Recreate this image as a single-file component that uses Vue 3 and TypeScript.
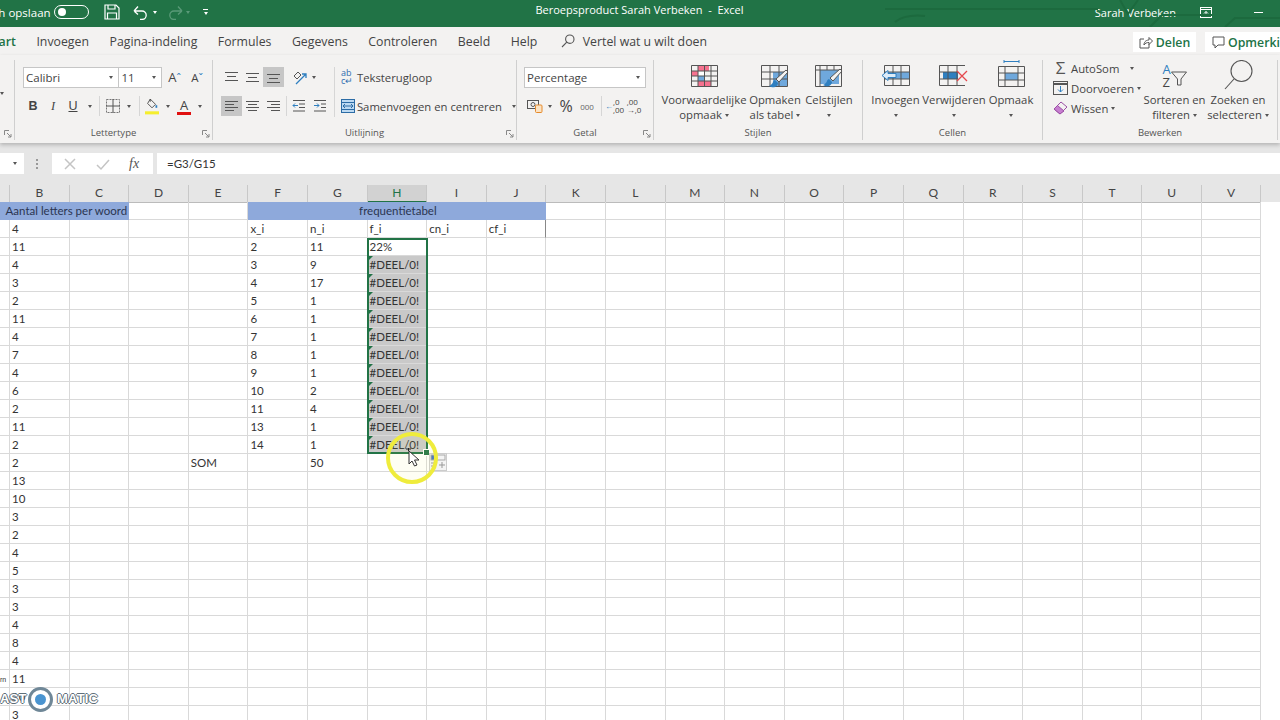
<script setup lang="ts">
import { computed } from 'vue'

// kolommen in het werkblad, A is grotendeels buiten beeld
const columns = ['', ...'BCDEFGHIJKLMNOPQRSTUV'.split('')]

const lettersB = ['4', '11', '4', '3', '2', '11', '4', '7', '4', '6', '2', '11', '2', '2', '13', '10', '3', '2', '4', '5', '3', '3', '4', '8', '4', '11', '10', '3']
const xi = ['2', '3', '4', '5', '6', '7', '8', '9', '10', '11', '13', '14']
const ni = ['11', '9', '17', '1', '1', '1', '1', '1', '2', '4', '1', '1']

interface Cell {
  text: string
  span: number
  kind: string
}

const blueRow: Cell[] = [
  { text: 'Aantal letters per woord', span: 3, kind: 'blue right' },
  { text: '', span: 1, kind: '' },
  { text: '', span: 1, kind: '' },
  { text: 'frequentietabel', span: 5, kind: 'blue center' },
  ...Array.from({ length: 12 }, () => ({ text: '', span: 1, kind: '' })),
]

const rows = computed<Cell[][]>(() =>
  lettersB.map((val, r) =>
    columns.map((col) => {
      let text = ''
      let kind = ''
      const i = r - 1
      if (col === 'B') text = val
      if (r === 0) {
        if (col === 'F') text = 'x_i'
        if (col === 'G') text = 'n_i'
        if (col === 'H') text = 'f_i'
        if (col === 'I') text = 'cn_i'
        if (col === 'J') { text = 'cf_i'; kind = 'edge' }
      } else if (i < xi.length) {
        if (col === 'F') text = xi[i]
        if (col === 'G') text = ni[i]
        if (col === 'H') {
          text = i === 0 ? '22%' : '#DEEL/0!'
          kind = i === 0 ? '' : 'err'
        }
      } else if (i === xi.length) {
        if (col === 'E') text = 'SOM'
        if (col === 'G') text = '50'
      }
      return { text, span: 1, kind }
    }),
  ),
)
</script>

<template>
  <div class="app">
    <div class="titlebar">
      <svg class="circuit" width="400" height="27" viewBox="0 0 400 27">
        <path d="M5 9H170l8 0M178 9l40 0M15 22q10-8 30-6M240 0l8 14 10-14M270 27l12-12h50M345 27l10-9h45" fill="none" stroke="#1c6a3e" stroke-width="2" />
      </svg>
      <div class="qat">
        <span class="autosave">Automatisch opslaan</span>
        <span class="toggle"><i></i></span>
        <svg class="save" width="16" height="16" viewBox="0 0 16 16" fill="none" stroke="#fff" stroke-width="1.2">
          <path d="M1 1h11l3 3v11H1z" />
          <path d="M4 1v4h7V1M3.5 15V9h9v6" />
        </svg>
        <svg class="undo" width="15" height="15" viewBox="0 0 15 15" fill="none" stroke="#fff" stroke-width="1.3">
          <path d="M1 6h8a4.2 4.2 0 0 1 0 8.4H7M1 6l4-4.5M1 6l4 3.5" />
        </svg>
        <i class="caret white undo-caret"></i>
        <svg class="redo" width="15" height="15" viewBox="0 0 15 15" fill="none" stroke="#5a9a78" stroke-width="1.3">
          <path d="M14 6H6a4.2 4.2 0 0 0 0 8.4h2M14 6l-4-4.5M14 6l-4 3.5" />
        </svg>
        <i class="caret dim redo-caret"></i>
        <span class="customize"><b></b><i class="caret white"></i></span>
      </div>
      <div class="doc-title">Beroepsproduct Sarah Verbeken &nbsp;-&nbsp; Excel</div>
      <div class="user">
        <span>Sarah Verbeken</span>
        <svg class="display-opt" width="12" height="11" viewBox="0 0 12 11" fill="none" stroke="#fff">
          <rect x=".5" y=".5" width="11" height="10" />
          <path d="M.5 2.5h11M6 9V4.5M4 6.5l2-2 2 2" />
        </svg>
        <b class="minimize"></b>
      </div>
    </div>

    <div class="tabs">
      <span class="tab active">Start</span>
      <span class="tab">Invoegen</span>
      <span class="tab">Pagina-indeling</span>
      <span class="tab">Formules</span>
      <span class="tab">Gegevens</span>
      <span class="tab">Controleren</span>
      <span class="tab">Beeld</span>
      <span class="tab">Help</span>
      <span class="tell">
        <svg width="14" height="14" viewBox="0 0 14 14" fill="none" stroke="#555" stroke-width="1.1">
          <circle cx="8.8" cy="5.2" r="4.2" />
          <path d="M5.8 8.2L1 13" />
        </svg>
        Vertel wat u wilt doen
      </span>
      <span class="share">
        <svg width="14" height="13" viewBox="0 0 14 13" fill="none" stroke="#555">
          <path d="M5 3H1v9h9V8M5 9c0-4 3-5 5-5V1.500l3.500 3.500L10 8.500V6.500C8 6.500 6 7 5 9z" />
        </svg>
        Delen
      </span>
      <span class="share comment">
        <svg width="13" height="13" viewBox="0 0 13 13" fill="none" stroke="#555">
          <path d="M1 1h11v8H6l-3 3V9H1z" />
        </svg>
        Opmerkingen
      </span>
    </div>

    <div class="ribbon">
      <!-- Klembord, bijna helemaal buiten beeld -->
      <section class="group g-clip">
        <i class="caret clip-caret"></i>
        <svg class="launch" width="8" height="8" viewBox="0 0 8 8" fill="none" stroke="#888"><path d="M.5 5V.5H5M3 3l4 4M7 4v3H4" /></svg>
      </section>

      <section class="group g-font">
        <div class="row">
          <div class="select font-name"><span>Calibri</span><i class="caret"></i></div>
          <div class="select font-size"><span>11</span><i class="caret"></i></div>
          <span class="grow-a">A<em>ˆ</em></span>
          <span class="grow-a small">A<em>ˇ</em></span>
        </div>
        <div class="row row2">
          <span class="slot w20 t-b">B</span>
          <span class="slot w20 t-i">I</span>
          <span class="slot w20 t-u">U</span>
          <span class="slot w14"><i class="caret"></i></span>
          <span class="slot w4"><b class="vsep"></b></span>
          <span class="slot w24">
            <svg width="14" height="14" viewBox="0 0 14 14" fill="none" stroke="#777" stroke-dasharray="2 1"><rect x=".5" y=".5" width="13" height="13" /><path d="M7 0v14M0 7h14" stroke="#555" stroke-dasharray="none" /></svg>
          </span>
          <span class="slot w8"><i class="caret"></i></span>
          <span class="slot w12"><b class="vsep"></b></span>
          <span class="slot w14">
            <svg width="16" height="19" viewBox="0 0 16 19" fill="none"><path d="M6 1l6 6-4 4-5-5zM6 1v3" stroke="#444" /><path d="M13 8v3" stroke="#2f7fc0" stroke-width="2" /><rect y="15" width="16" height="3.500" fill="#f5ee2e" /></svg>
          </span>
          <span class="slot w18"><i class="caret"></i></span>
          <span class="slot w14">
            <span class="color-a">A</span>
          </span>
          <span class="slot w18"><i class="caret"></i></span>
        </div>
        <div class="label">Lettertype</div>
        <svg class="launch" width="8" height="8" viewBox="0 0 8 8" fill="none" stroke="#888"><path d="M.5 5V.5H5M3 3l4 4M7 4v3H4" /></svg>
      </section>

      <section class="group g-align">
        <div class="split">
          <div class="col-a">
            <div class="row">
              <span class="slot w21"><svg width="15" height="12" viewBox="0 0 15 12" stroke="#555"><path d="M1 1.500h13M3 5.500h9M1 9.500h13" /></svg></span>
              <span class="slot w21"><svg width="15" height="12" viewBox="0 0 15 12" stroke="#555"><path d="M1 2.500h13M3 6.500h9M1 10.500h13" /></svg></span>
              <span class="slot w21 on"><svg width="15" height="12" viewBox="0 0 15 12" stroke="#555"><path d="M1 3.500h13M3 7.500h9M1 11.500h13" /></svg></span>
              <span class="slot w6"></span>
              <span class="slot w20">
                <svg width="16" height="15" viewBox="0 0 16 15" fill="none"><path d="M2 6l4-4 3 3-4 4zM6 8l2-2" stroke="#555" /><path d="M4 14L14 4M10 4h4v4" stroke="#2f7fc0" stroke-width="1.300" /></svg>
              </span>
              <span class="slot w8"><i class="caret"></i></span>
            </div>
            <div class="row row2">
              <span class="slot w21 on"><svg width="15" height="12" viewBox="0 0 15 12" stroke="#555"><path d="M1 1.500h13M1 4.500h9M1 7.500h13M1 10.500h9" /></svg></span>
              <span class="slot w21"><svg width="15" height="12" viewBox="0 0 15 12" stroke="#555"><path d="M1 1.500h13M3 4.500h9M1 7.500h13M3 10.500h9" /></svg></span>
              <span class="slot w21"><svg width="15" height="12" viewBox="0 0 15 12" stroke="#555"><path d="M1 1.500h13M5 4.500h9M1 7.500h13M5 10.500h9" /></svg></span>
              <span class="slot w4"><b class="vsep"></b></span>
              <span class="slot w22"><svg width="14" height="12" viewBox="0 0 14 12" fill="none" stroke="#555"><path d="M1 .5h12M7 4h6M7 7.500h6M1 11h12" /><path d="M6 5.500H1M3 3.500l-2 2 2 2" stroke="#2f7fc0" /></svg></span>
              <span class="slot w20"><svg width="14" height="12" viewBox="0 0 14 12" fill="none" stroke="#555"><path d="M1 .5h12M8 4h5M8 7.500h5M1 11h12" /><path d="M1 5.500h5M4 3.500l2 2-2 2" stroke="#2f7fc0" /></svg></span>
            </div>
          </div>
          <div class="col-b">
            <div class="row textbtn">
              <span class="ab">ab<br />c↵</span>
              <span>Teksterugloop</span>
            </div>
            <div class="row textbtn row2">
              <svg width="14" height="14" viewBox="0 0 14 14" fill="#bcd9f2" stroke="#2c6ca5"><rect x=".5" y=".5" width="13" height="13" /><path d="M0 3.500h14M0 10.500h14M2 7h10M4 5L2 7l2 2M10 5l2 2-2 2" fill="none" /></svg>
              <span class="merge-text">Samenvoegen en centreren</span>
              <i class="caret"></i>
            </div>
          </div>
        </div>
        <div class="label">Uitlijning</div>
        <svg class="launch" width="8" height="8" viewBox="0 0 8 8" fill="none" stroke="#888"><path d="M.5 5V.5H5M3 3l4 4M7 4v3H4" /></svg>
      </section>

      <section class="group g-number">
        <div class="row">
          <div class="select number"><span>Percentage</span><i class="caret"></i></div>
        </div>
        <div class="row row2">
          <span class="slot w21">
            <svg width="16" height="14" viewBox="0 0 16 14" fill="none"><rect x=".5" y="1.500" width="11" height="8" stroke="#555" /><circle cx="6" cy="5.500" r="2" stroke="#555" /><rect x="8.500" y="6" width="6.500" height="7.500" rx="1" fill="#fbe3c4" stroke="#e58a2c" /></svg>
          </span>
          <span class="slot w10"><i class="caret"></i></span>
          <span class="slot w22 percent">%</span>
          <span class="slot w20 thousand">000</span>
          <span class="slot w8"><b class="vsep"></b></span>
          <span class="slot w19 dec"><em>←</em><span>,0<br />,00</span></span>
          <span class="slot w20 dec"><span>,00<br />→,0</span></span>
        </div>
        <div class="label">Getal</div>
        <svg class="launch" width="8" height="8" viewBox="0 0 8 8" fill="none" stroke="#888"><path d="M.5 5V.5H5M3 3l4 4M7 4v3H4" /></svg>
      </section>

      <section class="group g-styles">
        <div class="bigs">
          <div class="big w80">
            <span class="big-icon">
              <svg width="27" height="22" viewBox="0 0 27 22" fill="none">
                <rect x="7" y="1" width="11" height="5" fill="#f5728f" />
                <rect x="1" y="6" width="6" height="5" fill="#f5728f" />
                <rect x="7" y="6" width="6" height="5" fill="#fff" />
                <rect x="7" y="11" width="6" height="5" fill="#6fa8dc" />
                <rect x="7" y="16" width="13" height="5" fill="#f5728f" />
                <path d="M.5.5h26v21H.5zM7 0v22M13.500 0v22M20 0v22M0 6h27M0 11h27M0 16h27" stroke="#555" />
              </svg>
            </span>
            <span>Voorwaardelijke</span>
            <span>opmaak <i class="caret"></i></span>
          </div>
          <div class="big w48">
            <span class="big-icon">
              <svg width="28" height="25" viewBox="0 0 28 25" fill="none">
                <rect x="12" y="7" width="15" height="14" fill="#6fa8dc" />
                <path d="M.5.5h26v21H.5zM9 0v22M18 0v22M0 7h27M0 14h27" stroke="#555" />
                <path d="M27 7l-9 10-3-3 10-9z" fill="#f3f2f1" stroke="#555" />
                <path d="M14 15c-3 1-1 4-6 6 5 3 9 0 9-3z" fill="#2f7fc0" />
              </svg>
            </span>
            <span>Opmaken</span>
            <span>als tabel <i class="caret"></i></span>
          </div>
          <div class="big w46">
            <span class="big-icon">
              <svg width="28" height="25" viewBox="0 0 28 25" fill="none">
                <rect x="5" y="5" width="19" height="14" fill="#6fa8dc" />
                <path d="M.5.5h26v21H.5zM5 0v5M12 0v5M19 0v5M0 5h27M5 5v17" stroke="#555" />
                <path d="M27 6l-9 10-3-3 10-9z" fill="#f3f2f1" stroke="#555" />
                <path d="M14 14c-3 1-1 4-6 6 5 3 9 0 9-3z" fill="#2f7fc0" />
              </svg>
            </span>
            <span>Celstijlen</span>
            <span><i class="caret"></i></span>
          </div>
        </div>
        <div class="label">Stijlen</div>
      </section>

      <section class="group g-cells">
        <div class="bigs">
          <div class="big w45">
            <span class="big-icon">
              <svg width="30" height="21" viewBox="0 0 30 21" fill="none">
                <rect x="3" y="7" width="26" height="7" fill="#6fa8dc" />
                <path d="M3.500.5h25v20h-25zM12 0v21M20 0v21M3 7h26M3 14h26" stroke="#555" />
                <path d="M1 10.500L7 5.500v3h8v4H7v3z" fill="#dcebf8" stroke="#2f7fc0" />
              </svg>
            </span>
            <span>Invoegen</span>
            <span><i class="caret"></i></span>
          </div>
          <div class="big w58">
            <span class="big-icon">
              <svg width="30" height="21" viewBox="0 0 30 21" fill="none">
                <rect x="4" y="7" width="15" height="7" fill="#2f7fc0" />
                <path d="M26 .5H.5v20H26M9 0v21M18 0v21M0 7h19M0 14h19" stroke="#555" />
                <path d="M18 6l10 10M28 6L18 16" stroke="#e5484d" stroke-width="1.300" />
              </svg>
            </span>
            <span>Verwijderen</span>
            <span><i class="caret"></i></span>
          </div>
          <div class="big w42">
            <span class="big-icon top">
              <svg width="27" height="27" viewBox="0 0 27 27" fill="none">
                <path d="M6 1.500h15M6 0v3M21 0v3" stroke="#2f7fc0" />
                <rect x="7" y="13" width="13" height="7" fill="#6fa8dc" />
                <path d="M.5 6.500h26v20H.5zM7 6v21M20 6v21M0 13h27M0 20h27" stroke="#555" />
              </svg>
            </span>
            <span>Opmaak</span>
            <span><i class="caret"></i></span>
          </div>
        </div>
        <div class="label">Cellen</div>
      </section>

      <section class="group g-edit">
        <div class="bigs">
          <div class="stack">
            <div class="row textbtn edit-row">
              <span class="sum">Σ</span>
              <span>AutoSom</span>
              <i class="caret autosom-caret"></i>
            </div>
            <div class="row textbtn edit-row">
              <svg width="15" height="14" viewBox="0 0 15 14" fill="none"><rect x=".5" y=".5" width="14" height="13" stroke="#555" /><path d="M0 3h15" stroke="#555" stroke-width="2" /><path d="M7.500 5v6M5 8.500l2.500 2.500L10 8.500" stroke="#2f7fc0" /></svg>
              <span>Doorvoeren</span>
              <i class="caret"></i>
            </div>
            <div class="row textbtn edit-row">
              <svg width="15" height="14" viewBox="0 0 15 14" fill="none"><path d="M8 1l6 5-7 7-6-5z" fill="#f3f2f1" stroke="#9b4fa5" /><path d="M4.500 4.500L11 10l-4 3-6-5z" fill="#c77fd0" stroke="#9b4fa5" /></svg>
              <span>Wissen</span>
              <i class="caret"></i>
            </div>
          </div>
          <div class="big w57">
            <span class="big-icon sort">
              <span class="az"><em>A</em><span>Z</span></span>
              <svg width="16" height="15" viewBox="0 0 16 15" fill="none" stroke="#555"><path d="M.5 1h15L10 8v6H6.500V8z" /></svg>
            </span>
            <span>Sorteren en</span>
            <span>filteren <i class="caret"></i></span>
          </div>
          <div class="big w58 search">
            <span class="big-icon top">
              <svg width="29" height="31" viewBox="0 0 29 31" fill="none" stroke="#555" stroke-width="1.100"><circle cx="17.500" cy="11" r="10.500" /><path d="M10 19L1 29" /></svg>
            </span>
            <span>Zoeken en</span>
            <span>selecteren <i class="caret"></i></span>
          </div>
        </div>
        <div class="label">Bewerken</div>
      </section>
    </div>

    <div class="formula-area">
      <div class="namebox"><i class="caret"></i></div>
      <span class="dots"></span>
      <div class="fx-box">
        <svg width="14" height="14" viewBox="0 0 14 14" fill="none" stroke="#c4c4c4" stroke-width="1.500"><path d="M2 2l10 10M12 2L2 12" /></svg>
        <svg width="14" height="14" viewBox="0 0 14 14" fill="none" stroke="#c4c4c4" stroke-width="1.500"><path d="M1 8l4 4 8-9" /></svg>
        <span class="fx">fx</span>
      </div>
      <div class="formula">=G3/G15</div>
    </div>

    <div class="sheet">
      <div class="headers">
        <div v-for="(col, i) in columns" :key="i" class="colhead" :class="{ picked: col === 'H' }">{{ col }}</div>
      </div>
      <div class="cells blue-row">
        <div v-for="(cell, i) in blueRow" :key="i" class="cell" :class="cell.kind" :style="{ gridColumn: `span ${cell.span}` }">{{ cell.text }}</div>
      </div>
      <div v-for="(row, r) in rows" :key="r" class="cells">
        <div v-for="(cell, c) in row" :key="c" class="cell" :class="cell.kind">{{ cell.text }}</div>
      </div>

      <!-- selectie en muis liggen boven het blad -->
      <div class="selection"><b class="handle"></b></div>
      <div class="paste-opt">
        <svg width="17" height="16" viewBox="0 0 17 16" fill="none"><rect x="1" y="1" width="6" height="5" fill="#4472c4" /><rect x="1" y="1" width="14" height="5" stroke="#aaa" /><path d="M1 9h4M1 12h3M12 8v6M9 11h6" stroke="#999" /></svg>
      </div>
      <div class="highlight"></div>
      <svg class="pointer" width="16" height="20" viewBox="0 0 16 20">
        <path d="M3 3l0 13 3-3 2.500 5 2.500-1-2.500-5H13z" fill="#fff" stroke="#333" />
        <path d="M0 1h5M2.500 0v3" stroke="#222" />
      </svg>
    </div>

    <div class="watermark">
      <span class="wm-small">rn</span>
      <span class="wm-text wm-left">AST</span>
      <span class="wm-logo"><i></i></span>
      <span class="wm-text wm-right">MATIC</span>
    </div>
  </div>
</template>

<style>
html,
body {
  margin: 0;
  overflow: hidden;
  background: #fff;
}
</style>

<style scoped>
.app {
  position: relative;
  width: 1280px;
  height: 720px;
  overflow: hidden;
  font-family: "Open Sans", "Liberation Sans", sans-serif;
  color: #444;
  background: #fff;
}

/* titelbalk */
.titlebar {
  position: relative;
  display: flex;
  height: 27px;
  background: #217346;
  color: #fff;
  font-size: 11.5px;
}
.circuit {
  position: absolute;
  left: 880px;
  top: 0;
}
.qat {
  position: relative;
  display: flex;
  align-items: center;
  width: 500px;
  height: 24px;
}
.autosave {
  margin-left: -62px;
  width: 111px;
  white-space: nowrap;
  text-align: right;
}
.toggle {
  width: 35px;
  height: 14px;
  margin-left: 5px;
  border: 1px solid #fff;
  border-radius: 8px;
  box-sizing: border-box;
  display: flex;
  align-items: center;
  padding-left: 3px;
}
.toggle i {
  width: 8px;
  height: 8px;
  border-radius: 50%;
  background: #fff;
}
.save {
  margin-left: 15px;
}
.undo {
  margin-left: 13px;
}
.undo-caret {
  margin-left: 5px;
}
.redo {
  margin-left: 11px;
}
.redo-caret {
  margin-left: 3px;
}
.customize {
  margin-left: 13px;
  display: flex;
  flex-direction: column;
  gap: 2px;
  align-items: center;
}
.customize b {
  width: 5px;
  height: 1px;
  background: #fff;
}
.doc-title {
  position: absolute;
  left: 440px;
  width: 399px;
  text-align: center;
  line-height: 20px;
  white-space: nowrap;
  font-size: 11px;
}
.user {
  margin-left: auto;
  display: flex;
  align-items: center;
  height: 24px;
  white-space: nowrap;
}
.user span {
  font-size: 11px;
  margin-right: 24px;
}
.minimize {
  width: 9px;
  height: 1px;
  margin: 0 17px 0 42px;
  background: #fff;
}

/* tabs */
.tabs {
  display: flex;
  align-items: center;
  height: 28px;
  margin-left: -13px;
  background: #f3f2f1;
  font-size: 12.300px;
  width: 1400px;
  position: relative;
  color: #444;
}
.tab {
  position: relative;
  margin-right: 20.500px;
  white-space: nowrap;
}
.tab.active {
  color: #217346;
  font-weight: 600;
}
.tab.active::after {
  content: "";
  position: absolute;
  left: 0;
  right: 0;
  bottom: -7px;
  height: 2px;
  background: #217346;
}
.tell {
  display: flex;
  align-items: center;
  gap: 8px;
  margin-left: 3px;
  white-space: nowrap;
}
.share {
  position: absolute;
  left: 1146px;
  top: 5px;
  width: 63px;
  height: 20px;
  display: flex;
  align-items: center;
  justify-content: center;
  gap: 3px;
  background: #fff;
  color: #217346;
  font-weight: 600;
  white-space: nowrap;
}
.comment {
  left: 1218px;
  width: 110px;
  justify-content: flex-start;
  padding-left: 7px;
}

/* lint */
.ribbon {
  position: relative;
  z-index: 1;
  display: flex;
  height: 88px;
  background: #f3f2f1;
  box-shadow: 0 2px 4px rgba(0, 0, 0, 0.22);
  font-size: 11.300px;
}
.group {
  position: relative;
  box-sizing: border-box;
  height: 80px;
  margin-top: 5px;
  padding-top: 7px;
  border-right: 1px solid #cfcfcf;
  flex: none;
}
.g-clip {
  width: 15px;
}
.g-font {
  width: 198px;
  padding-left: 8px;
}
.g-align {
  width: 304px;
  padding-left: 8px;
}
.g-number {
  width: 137px;
  padding-left: 7px;
}
.g-styles {
  width: 209px;
  padding-top: 0;
  padding-left: 10px;
}
.g-cells {
  width: 180px;
  padding-top: 0;
  padding-left: 10px;
}
.g-edit {
  width: 235px;
  padding-top: 0;
  padding-left: 10px;
}
.clip-caret {
  position: absolute;
  left: 0;
  top: 32px;
}
.row {
  display: flex;
  align-items: center;
  height: 20px;
  white-space: nowrap;
}
.row2 {
  margin-top: 9px;
}
.slot {
  display: flex;
  flex: none;
  align-items: center;
  justify-content: center;
  height: 20px;
}
.w4 { width: 4px; }
.w6 { width: 6px; }
.w8 { width: 8px; }
.w10 { width: 10px; }
.w12 { width: 12px; }
.w14 { width: 14px; }
.w18 { width: 18px; }
.w19 { width: 19px; }
.w20 { width: 20px; }
.w21 { width: 21px; }
.w22 { width: 22px; }
.w24 { width: 24px; }
.on {
  background: #c6c6c6;
}
.vsep {
  display: block;
  width: 1px;
  height: 20px;
  background: #d6d6d6;
}
.caret {
  display: inline-block;
  flex: none;
  width: 0;
  height: 0;
  border-left: 2.500px solid transparent;
  border-right: 2.500px solid transparent;
  border-top: 3px solid #555;
  vertical-align: middle;
}
.caret.white {
  border-top-color: #fff;
}
.caret.dim {
  border-top-color: #5a9a78;
}
.select {
  display: flex;
  align-items: center;
  justify-content: space-between;
  box-sizing: border-box;
  height: 21px;
  padding: 0 5px 0 2px;
  background: #fff;
  border: 1px solid #c6c6c6;
  font-size: 11.500px;
}
.font-name {
  width: 97px;
}
.font-size {
  width: 44px;
  margin-left: -1px;
  margin-right: 6px;
}
.number {
  width: 122px;
}
.grow-a {
  width: 21px;
  font-size: 13px;
  text-align: left;
}
.grow-a.small {
  font-size: 11.500px;
  padding-left: 2px;
}
.grow-a em {
  color: #2f7fc0;
  font-style: normal;
  font-size: 11px;
}
.t-b,
.t-i,
.t-u {
  font-size: 12.500px;
  color: #444;
  font-family: "Liberation Sans", sans-serif;
}
.t-b {
  font-weight: 700;
}
.t-i {
  font-style: italic;
  font-family: "Liberation Serif", serif;
}
.t-u {
  text-decoration: underline;
}
.color-a {
  display: block;
  width: 14px;
  font-size: 13px;
  line-height: 14px;
  text-align: center;
  border-bottom: 3px solid #e01010;
}
.label {
  position: absolute;
  left: 0;
  right: 0;
  bottom: 0;
  text-align: center;
  font-size: 9.500px;
  line-height: 14px;
  color: #555;
}
.launch {
  position: absolute;
  right: 2px;
  bottom: 2px;
}
.split {
  display: flex;
}
.col-a {
  box-sizing: border-box;
  width: 114px;
  height: 50px;
  border-right: 1px solid #d6d6d6;
}
.col-b {
  padding-left: 6px;
}
.textbtn {
  gap: 2px;
}
.ab {
  font-size: 9px;
  line-height: 8px;
  color: #2f6db0;
  width: 14px;
}
.merge-text {
  margin-right: 8px;
}
.percent {
  font-size: 16px;
  color: #444;
}
.thousand {
  font-size: 8px;
  color: #666;
}
.dec {
  font-size: 8px;
  line-height: 8px;
  color: #444;
}
.dec em {
  color: #2f7fc0;
  font-style: normal;
}
.bigs {
  display: flex;
  gap: 7px;
}
.big {
  display: flex;
  flex: none;
  flex-direction: column;
  align-items: center;
  line-height: 15px;
  white-space: nowrap;
}
.big-icon {
  display: flex;
  align-items: flex-start;
  height: 32px;
  padding-top: 5px;
  box-sizing: border-box;
}
.big-icon.top {
  padding-top: 0;
}
.w80 { width: 80px; }
.w48 { width: 48px; }
.w46 { width: 46px; }
.w45 { width: 45px; }
.w58 { width: 58px; }
.w42 { width: 42px; }
.w57 { width: 57px; }
.stack {
  width: 93px;
  margin-right: -7px;
  margin-top: -2px;
}
.edit-row {
  gap: 3px;
}
.sum {
  width: 15px;
  font-size: 17px;
  line-height: 20px;
  text-align: center;
  color: #555;
}
.autosom-caret {
  margin-left: 8px;
}
.sort {
  gap: 0;
  padding-top: 3px;
}
.az {
  display: flex;
  flex-direction: column;
  font-size: 13px;
  line-height: 13px;
}
.az em {
  font-style: normal;
  color: #2f7fc0;
}
.sort svg {
  margin-top: 8px;
}
.search {
  margin-left: -1px;
}

/* formulebalk */
.formula-area {
  display: flex;
  align-items: flex-start;
  height: 42px;
  box-sizing: border-box;
  padding-top: 10px;
  background: #e6e6e6;
}
.namebox {
  display: flex;
  align-items: center;
  justify-content: flex-end;
  box-sizing: border-box;
  width: 24px;
  height: 21px;
  padding-right: 7px;
  background: #fff;
}
.dots {
  width: 2px;
  height: 10px;
  margin: 6px 14px 0 12px;
  background: repeating-linear-gradient(#999 0 2px, transparent 2px 4px);
}
.fx-box {
  display: flex;
  align-items: center;
  gap: 19px;
  box-sizing: border-box;
  width: 101px;
  height: 21px;
  padding-left: 11px;
  background: #fff;
}
.fx {
  font-family: "Liberation Serif", serif;
  font-style: italic;
  font-size: 14px;
  color: #555;
}
.formula {
  flex: 1;
  height: 21px;
  margin-left: 4px;
  padding-left: 10px;
  background: #fff;
  line-height: 21px;
  font-size: 11.500px;
  color: #333;
  font-family: "Lato", sans-serif;
}

/* werkblad */
.sheet {
  position: relative;
  font-family: "Lato", "Liberation Sans", sans-serif;
  font-size: 11.500px;
  color: #333;
}
.headers,
.cells {
  display: grid;
  grid-template-columns: 10px repeat(21, 59.6px);
  height: 18px;
}
.headers {
  height: 17px;
  background: #e6e6e6;
}
.colhead {
  box-sizing: border-box;
  border-right: 1px solid #c8c8c8;
  border-bottom: 1px solid #bbb;
  text-align: center;
  line-height: 16px;
  color: #444;
  font-size: 12px;
}
.colhead.picked {
  background: #d2d2d2;
  border-bottom: 2px solid #217346;
  color: #217346;
}
.cell {
  position: relative;
  box-sizing: border-box;
  min-width: 0;
  padding-left: 2px;
  border-right: 1px solid #d9d9d9;
  border-bottom: 1px solid #d9d9d9;
  line-height: 17px;
  white-space: nowrap;
  overflow: hidden;
}
.cell.blue {
  background: #8ea9db;
  border-color: #8ea9db;
  color: #2b3550;
}
.cell.right {
  text-align: right;
  padding-right: 1px;
}
.cell.center {
  text-align: center;
}
.cell.edge {
  border-right-color: #888;
}
.cell.err {
  background: #c9c9c9;
}
.cell.err::before {
  content: "";
  position: absolute;
  left: 1px;
  top: 0;
  border-top: 4px solid #217346;
  border-right: 4px solid transparent;
}
.selection {
  position: absolute;
  left: 367px;
  top: 53px;
  width: 61px;
  height: 216px;
  box-sizing: border-box;
  border: 2px solid #217346;
}
.handle {
  position: absolute;
  right: -4px;
  bottom: -4px;
  width: 5px;
  height: 5px;
  background: #217346;
  border: 1px solid #fff;
}
.paste-opt {
  position: absolute;
  left: 429px;
  top: 268px;
  width: 18px;
  height: 18px;
  background: #f4f4f4;
  border: 1px solid #ccc;
  box-sizing: border-box;
}
.highlight {
  position: absolute;
  left: 386px;
  top: 247px;
  width: 52px;
  height: 52px;
  box-sizing: border-box;
  border: 4px solid #efec3c;
  border-radius: 50%;
  background: rgba(245, 240, 120, 0.08);
}
.pointer {
  position: absolute;
  left: 406px;
  top: 263px;
}

/* watermerk */
.watermark {
  position: absolute;
  left: 0;
  top: 676px;
  width: 110px;
  height: 40px;
}
.wm-small {
  position: absolute;
  left: 0;
  top: 0;
  font-size: 7px;
  color: #333;
  font-family: "Liberation Sans", sans-serif;
}
.wm-text {
  position: absolute;
  top: 15px;
  font-family: "Liberation Sans", sans-serif;
  font-size: 13px;
  font-weight: 700;
  color: #fff;
  letter-spacing: 0.2px;
  text-shadow: -1px 0 #5f6f7a, 1px 0 #5f6f7a, 0 -1px #5f6f7a, 0 1px #5f6f7a;
}
.wm-left {
  left: 0;
}
.wm-right {
  left: 57px;
}
.wm-logo {
  position: absolute;
  left: 28px;
  top: 11px;
  display: flex;
  align-items: center;
  justify-content: center;
  width: 25px;
  height: 25px;
  box-sizing: border-box;
  border: 3px solid #6f8797;
  border-radius: 50%;
  background: #fff;
}
.wm-logo i {
  width: 11px;
  height: 11px;
  border-radius: 50%;
  background: #4a94d0;
}
</style>
